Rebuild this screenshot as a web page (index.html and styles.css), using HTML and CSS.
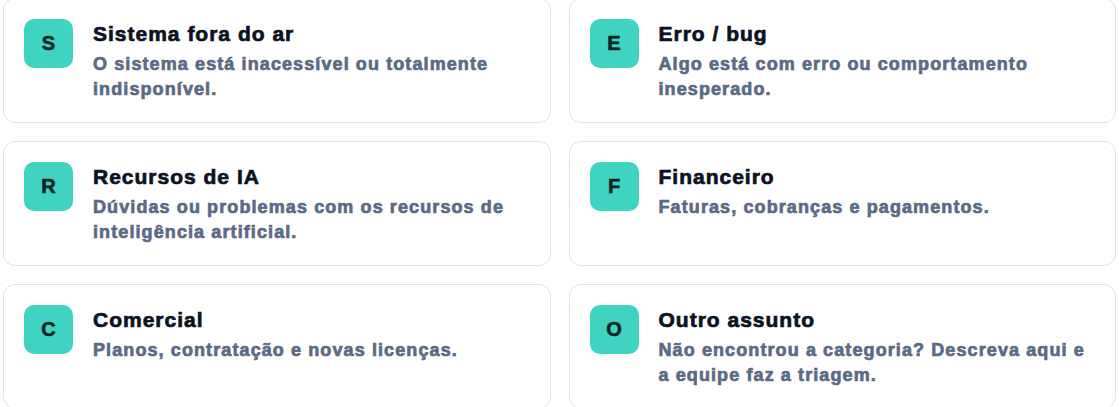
FILE: index.html
```html
<!DOCTYPE html>
<html lang="pt-BR">
<head>
  <meta charset="UTF-8">
  <meta name="viewport" content="width=device-width, initial-scale=1.0">
  <title>Categorias de suporte</title>
  <link rel="stylesheet" href="styles.css">
</head>
<body>
  <div class="categorias">
    <div class="card">
      <div class="icone">S</div>
      <div class="texto">
        <h3>Sistema fora do ar</h3>
        <p>O sistema está inacessível ou totalmente indisponível.</p>
      </div>
    </div>
    <div class="card">
      <div class="icone">E</div>
      <div class="texto">
        <h3>Erro / bug</h3>
        <p>Algo está com erro ou comportamento inesperado.</p>
      </div>
    </div>
    <div class="card">
      <div class="icone">R</div>
      <div class="texto">
        <h3>Recursos de IA</h3>
        <p>Dúvidas ou problemas com os recursos de inteligência artificial.</p>
      </div>
    </div>
    <div class="card">
      <div class="icone">F</div>
      <div class="texto">
        <h3>Financeiro</h3>
        <p>Faturas, cobranças e pagamentos.</p>
      </div>
    </div>
    <div class="card">
      <div class="icone">C</div>
      <div class="texto">
        <h3>Comercial</h3>
        <p>Planos, contratação e novas licenças.</p>
      </div>
    </div>
    <div class="card">
      <div class="icone">O</div>
      <div class="texto">
        <h3>Outro assunto</h3>
        <p>Não encontrou a categoria? Descreva aqui e a equipe faz a triagem.</p>
      </div>
    </div>
  </div>
</body>
</html>
```

FILE: styles.css
```css
body {
  margin: 0;
  font-family: "Liberation Sans", Arial, sans-serif;
  background-color: #ffffff;
}

.categorias {
  display: grid;
  grid-template-columns: 1fr 1fr;
  gap: 18px;
  margin-top: -2px;
  padding: 0 3px;
}

.card {
  display: flex;
  gap: 20px;
  padding: 20px;
  border: 1px solid #dce4ef;
  border-radius: 12px;
  background-color: #fff;
}

.icone {
  flex: none;
  width: 49px;
  height: 49px;
  border-radius: 10px;
  background-color: #3fd4c1;
  color: #0c2626;
  font-weight: bold;
  font-size: 20px;
  -webkit-text-stroke: 0.6px currentColor;
  display: flex;
  align-items: center;
  justify-content: center;
}

.texto h3 {
  margin: 0 0 4px;
  font-size: 21px;
  line-height: 29px;
  letter-spacing: 1px;
  -webkit-text-stroke: 0.7px currentColor;
  color: #0b1222;
}

.texto p {
  margin: 0;
  font-size: 18px;
  line-height: 25px;
  font-weight: bold;
  letter-spacing: 1.1px;
  -webkit-text-stroke: 0.7px currentColor;
  color: #5b6a85;
}
```
